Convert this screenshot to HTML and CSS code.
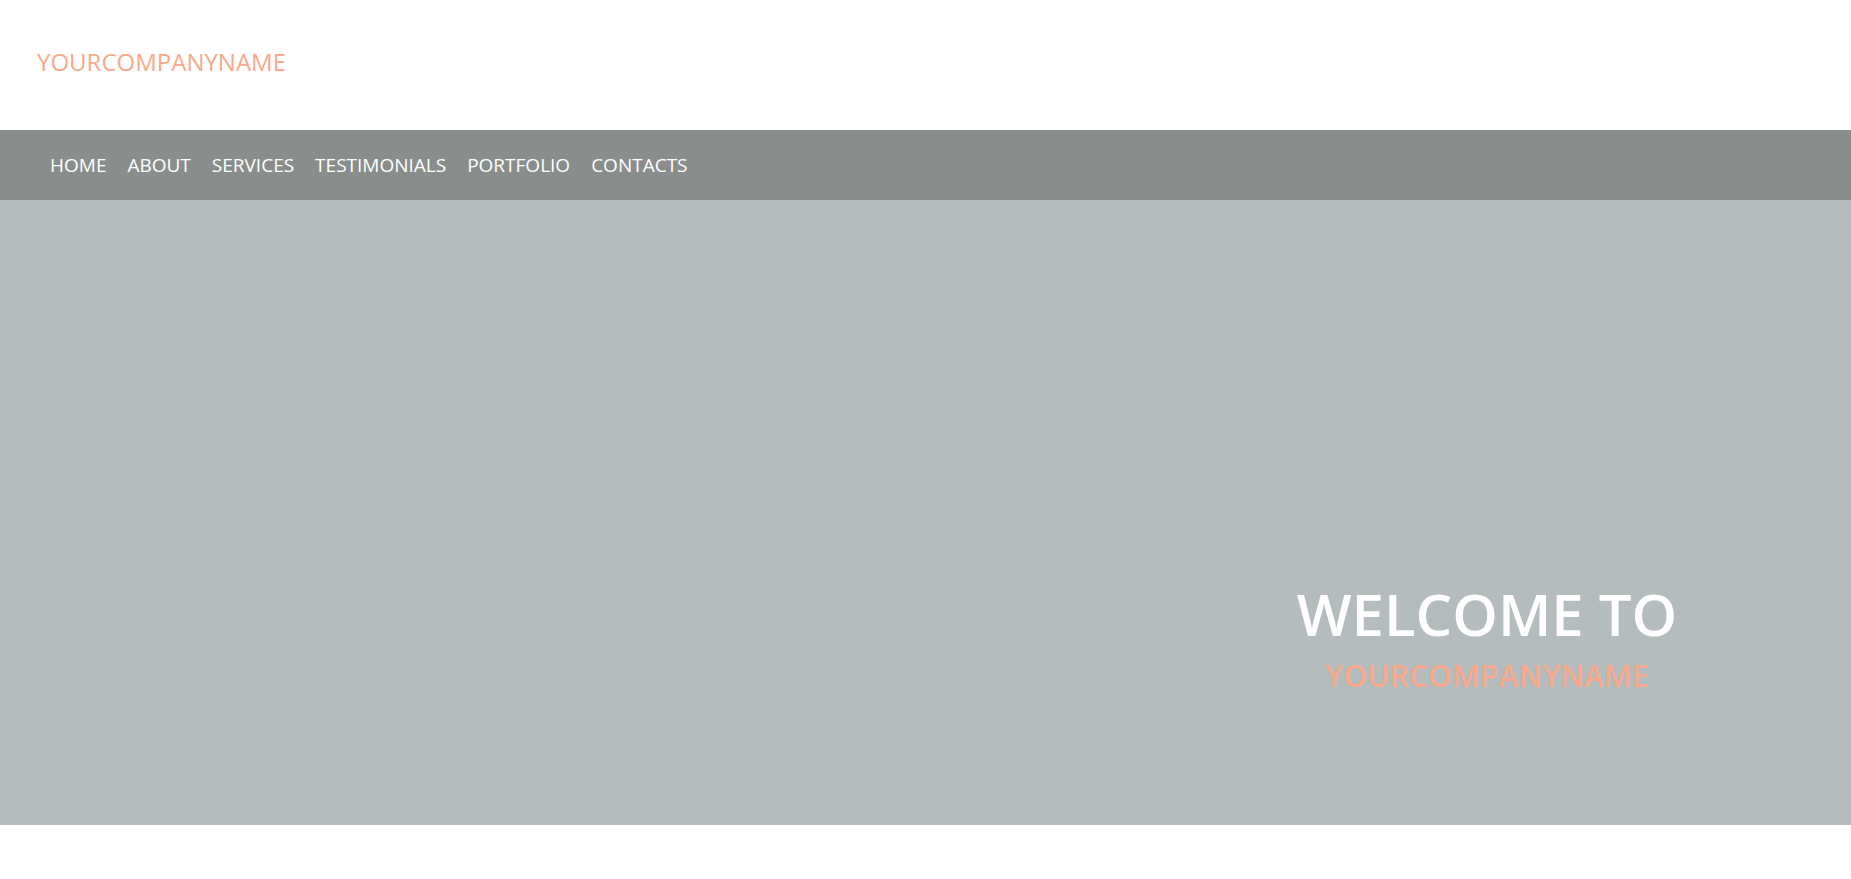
FILE: index.html
```html
<!DOCTYPE html>
<html lang="en">
<head>
<meta charset="utf-8">
<title>YourCompanyName</title>
<link rel="stylesheet" href="styles.css">
</head>
<body>
<header class="site-header">
  <a class="logo" href="#">YOURCOMPANYNAME</a>
</header>
<nav class="main-nav">
  <a href="#">HOME</a>
  <a href="#">ABOUT</a>
  <a href="#">SERVICES</a>
  <a href="#">TESTIMONIALS</a>
  <a href="#">PORTFOLIO</a>
  <a href="#">CONTACTS</a>
</nav>
<section class="hero">
  <div class="hero-text">
    <h1 class="hero-title">WELCOME TO</h1>
    <p class="hero-sub">YOURCOMPANYNAME</p>
  </div>
</section>
</body>
</html>
```

FILE: styles.css
```css
* { box-sizing: border-box; }
html, body {
  margin: 0;
  padding: 0;
  background: #ffffff;
  font-family: "Open Sans", "Noto Sans", sans-serif;
}
.site-header {
  height: 130px;
  display: flex;
  align-items: center;
  padding-left: 37px;
  padding-bottom: 8px;
}
.logo {
  color: #f7a98c;
  font-size: 24px;
  text-decoration: none;
}
.main-nav {
  height: 70px;
  background: #898e8d;
  display: flex;
  align-items: center;
  gap: 21px;
  padding-left: 50px;
}
.main-nav a {
  color: #ffffff;
  font-size: 19px;
  text-decoration: none;
}
.hero {
  height: 625px;
  background: #b4bcbd;
  display: flex;
  justify-content: flex-end;
  align-items: flex-start;
  padding-right: 114px;
  padding-top: 379px;
}
.hero-text {
  width: 500px;
  text-align: center;
}
.hero-title {
  margin: 0;
  color: #ffffff;
  font-size: 58px;
  font-weight: 600;
  line-height: 1.2;
}
.hero-sub {
  margin: 7px 0 0;
  color: #f7a98c;
  font-size: 30px;
  font-weight: 600;
  line-height: 1.3;
  letter-spacing: 0.2px;
}
```
